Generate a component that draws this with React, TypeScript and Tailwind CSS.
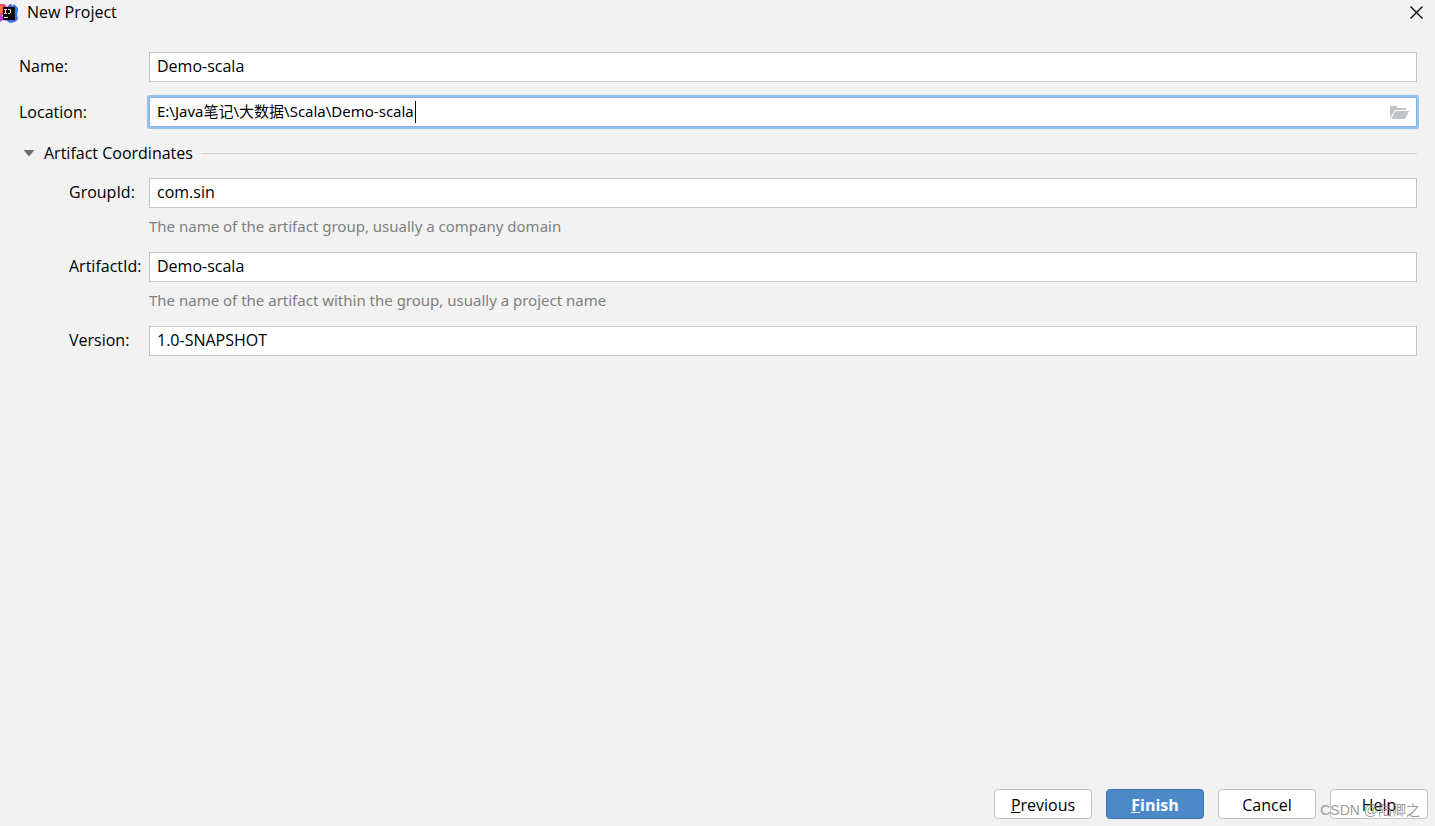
import React, { useState } from "react"

const IdeaLogo: React.FC = () => (
	<svg width="19" height="22" viewBox="0 0 19 22" aria-hidden="true">
		<path d="M0 2h4l5 4-4 7H0Z" fill="#fb3f62" />
		<path d="M0 3l3 1-1 7H0Z" fill="#fd7a3c" />
		<path d="M8 4l2-2h1l2 2 1-2 4 4-1 6 1 5-3 3-5 1-3-2Z" fill="#3f6be6" />
		<path d="M15 5l3 2-1 6-2 4Z" fill="#2f7df6" />
		<path d="M0 12l5 4 2 3-4-1-3 2Z" fill="#b63fdd" />
		<rect x="3" y="5" width="12" height="13" fill="#0b0b0d" />
		<path d="M4 7.500h3M5.500 7.500v4M4 11.500h3M8 7.500h2.500v3.500M10 11.500H8M4 15.500h4" stroke="#e0e0e0" fill="none" />
	</svg>
)

const FolderIcon: React.FC = () => (
	<svg width="20" height="16" viewBox="0 0 20 16" fill="#bfc4c8">
		<path d="M0 2h6l2 2h8v2H5l-5 8Z" />
		<path d="M5.500 7H19l-4 8H1Z" />
	</svg>
)

type FieldProps = {
	id: string
	label: string
	value: string
	nested?: boolean
	hint?: string
}

const Field: React.FC<FieldProps> = ({ id, label, value, nested, hint }) => {
	const [text, setText] = useState(value)
	return (
		<div>
			<div className="flex items-center pr-[18px]">
				<label
					htmlFor={id}
					className={
						nested ? "w-[149px] shrink-0 pb-0.5 pl-[69px]" : "w-[149px] shrink-0 pb-0.5 pl-[19px]"
					}
				>
					{label}
				</label>
				<input
					id={id}
					value={text}
					onChange={(e) => setText(e.target.value)}
					className="h-[30px] min-w-0 flex-1 border border-[#c4c4c4] bg-white px-[7px] pb-0.5 outline-none"
				/>
			</div>
			{hint && (
				<p className="pt-[7px] pb-px pl-[149px] font-['Noto_Sans',sans-serif] text-[15px] leading-[22px] text-[#808080]">
					{hint}
				</p>
			)}
		</div>
	)
}

const App: React.FC = () => {
	const [location, setLocation] = useState("E:\\Java笔记\\大数据\\Scala\\Demo-scala")
	const plain = "h-[30px] w-[98px] rounded-[4px] border border-[#c4c4c4] bg-white pt-0.5"
	return (
		<div className="flex min-h-screen flex-col bg-[#f2f2f2] font-['Open_Sans','Noto_Sans_CJK_SC',sans-serif] text-[16px] leading-[22px] text-black">
			<header className="flex h-[25px] items-center justify-between pr-3">
				<div className="flex items-center gap-2">
					<IdeaLogo />
					<h1 className="pb-0.5">New Project</h1>
				</div>
				<button aria-label="Close">
					<svg width="13" height="13" viewBox="0 0 13 13" stroke="#000" strokeWidth="1.3">
						<path d="M0.5 0.5l12 12M12.5 0.5l-12 12" />
					</svg>
				</button>
			</header>

			<form className="flex flex-1 flex-col pt-[27px]" onSubmit={(e) => e.preventDefault()}>
				<Field id="name" label="Name:" value="Demo-scala" />

				<div className="flex items-center pt-[15px] pr-[18px]">
					<label htmlFor="location" className="w-[149px] shrink-0 pl-[19px]">
						Location:
					</label>
					<div className="relative flex h-[30px] min-w-0 flex-1 items-center rounded-[1px] border border-[#87afdf] bg-white pr-[6px] ring-2 ring-[#97c3f3]">
						<input
							id="location"
							value={location}
							onChange={(e) => setLocation(e.target.value)}
							className="min-w-0 flex-1 px-[7px] pb-0.5 font-['Noto_Sans','Noto_Sans_CJK_SC',sans-serif] text-[15px] leading-[22px] outline-none"
						/>
						<span className="pointer-events-none absolute left-[265px] h-[22px] w-px bg-black" />
						<button type="button" aria-label="Browse">
							<FolderIcon />
						</button>
					</div>
				</div>

				<div className="flex items-center pt-[15px] pr-[18px] pl-[23px]">
					<button type="button" className="flex items-center gap-[9px]">
						<svg width="12" height="7" viewBox="0 0 12 7" fill="#6e6e6e">
							<path d="M0.5 0h11L6 6.5Z" />
						</svg>
						Artifact Coordinates
					</button>
					<div className="ml-2 h-px flex-1 bg-[#d1d1d1]" />
				</div>

				<div className="flex flex-col gap-[14px] pt-[14px]">
					<Field
						nested
						id="groupId"
						label="GroupId:"
						value="com.sin"
						hint="The name of the artifact group, usually a company domain"
					/>
					<Field
						nested
						id="artifactId"
						label="ArtifactId:"
						value="Demo-scala"
						hint="The name of the artifact within the group, usually a project name"
					/>
					<Field nested id="version" label="Version:" value="1.0-SNAPSHOT" />
				</div>

				<footer className="relative mt-auto flex justify-end gap-[14px] pr-[7px] pb-[7px]">
					<button type="button" className={plain}>
						<u>P</u>revious
					</button>
					<button className="h-[30px] w-[98px] rounded-[4px] border border-[#3d75b6] bg-[#4d89c9] pt-0.5 font-bold text-white">
						<u>F</u>inish
					</button>
					<button type="button" className={plain}>
						Cancel
					</button>
					<button type="button" className={plain}>
						Help
					</button>
					<span className="pointer-events-none absolute right-[15px] bottom-[5px] font-['Liberation_Sans','Noto_Sans_CJK_SC',sans-serif] text-[14px] text-[#808080]/80">
						CSDN @陆卿之
					</span>
				</footer>
			</form>
		</div>
	)
}

export default App
